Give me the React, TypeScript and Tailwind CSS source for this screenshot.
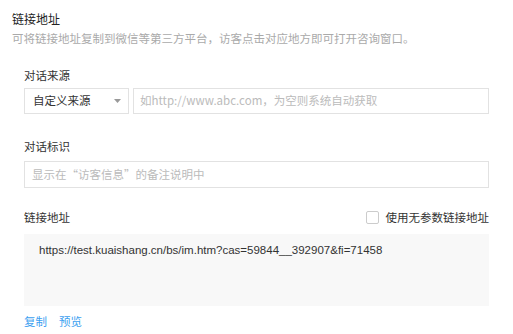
export default function App() {
  return (
    <div className="w-[513px] h-[334px] bg-white overflow-hidden font-['Noto_Sans_CJK_SC','Noto_Sans',sans-serif] text-[11.5px]">
      {/* Header */}
      <div className="px-3 pt-[9px]">
        <h2 className="text-[12px] leading-[20px] text-[#222]">链接地址</h2>
        <p className="leading-[18px] text-[#aaa]">
          可将链接地址复制到微信等第三方平台，访客点击对应地方即可打开咨询窗口。
        </p>
      </div>

      {/* Form */}
      <div className="px-6">
        <div className="mt-[19px] leading-[18px] text-[#333]">对话来源</div>
        <div className="mt-[4px] flex gap-1">
          <div className="w-[105px] h-[26px] border border-[#e2e2e2] flex items-center justify-between pl-2 pr-[7px] text-[#333]">
            <span>自定义来源</span>
            <svg width="7" height="4" viewBox="0 0 7 4">
              <path d="M0 0h7L3.5 4z" fill="#999" />
            </svg>
          </div>
          <div className="flex-1 h-[26px] border border-[#e2e2e2] flex items-center px-[6px] text-[#bbb]">
            如http://www.abc.com，为空则系统自动获取
          </div>
        </div>

        <div className="mt-[23px] leading-[18px] text-[#333]">对话标识</div>
        <div className="mt-[6px] h-[27px] border border-[#e2e2e2] flex items-center px-[7px] text-[#bbb]">
          显示在“访客信息”的备注说明中
        </div>

        <div className="mt-5 flex items-center justify-between leading-[18px]">
          <span className="text-[#333]">链接地址</span>
          <label className="flex items-center gap-[7px] text-[#333]">
            <span className="w-[13px] h-[13px] border border-[#ccc] rounded-[2px] bg-white" />
            使用无参数链接地址
          </label>
        </div>
        <div className="mt-2 h-[72px] bg-[#f8f8f8] pl-[15px] pt-[7px] leading-[18px] text-[11.5px] text-[#333] font-['Liberation_Sans',sans-serif]">
          https://test.kuaishang.cn/bs/im.htm?cas=59844__392907&amp;fi=71458
        </div>

        <div className="mt-[6px] flex gap-3 leading-[18px] text-[#3d9ff0]">
          <a href="#copy">复制</a>
          <a href="#preview">预览</a>
        </div>
      </div>
    </div>
  );
}
